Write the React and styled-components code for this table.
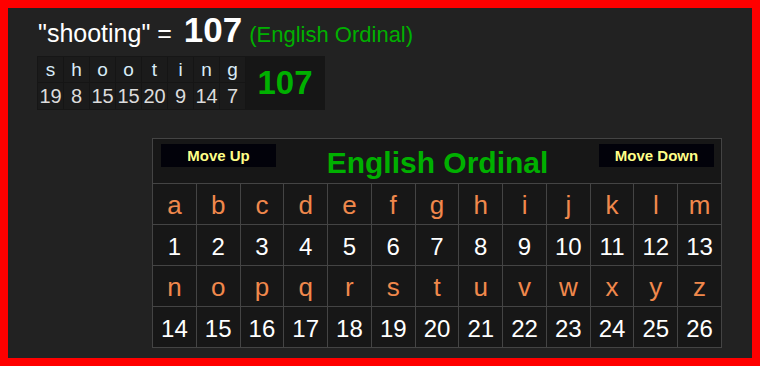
import React from 'react';
import styled, { createGlobalStyle } from 'styled-components';

const GlobalStyle = createGlobalStyle`
  html, body {
    margin: 0;
    padding: 0;
    background: #222222;
  }
  body {
    font-family: "Liberation Sans", Arial, sans-serif;
  }
`;

const Frame = styled.div`
  box-sizing: border-box;
  width: 760px;
  height: 366px;
  border: 8px solid #ff0000;
  background: #222222;
  padding: 2px 0 0 29px;
  overflow: hidden;
`;

const Heading = styled.div`
  display: flex;
  align-items: baseline;
  color: #ffffff;
  height: 46px;
  padding-left: 1px;
  white-space: pre;
`;

const Word = styled.span`
  font-size: 25px;
`;

const Total = styled.span`
  font-size: 35px;
  font-weight: bold;
  margin-left: 12px;
`;

const Cipher = styled.span`
  font-size: 22px;
  color: #00b000;
  margin-left: 7px;
`;

const Breakdown = styled.div`
  display: flex;
  width: max-content;
  background: #1b1b1b;
  border: 1px solid #161616;
`;

const LetterCol = styled.div`
  display: grid;
  grid-template-rows: 26px 26px;
  width: 25px;
  border-right: 1px solid #151515;
  text-align: center;
`;

const Cell = styled.div`
  display: flex;
  align-items: center;
  justify-content: center;
  font-size: ${p => (p.$letter ? '19px' : '20px')};
  color: ${p => (p.$letter ? '#d8ecf8' : '#dcdcdc')};
  border-bottom: ${p => (p.$letter ? '1px solid #151515' : 'none')};
`;

const SumCell = styled.div`
  width: 78px;
  display: flex;
  align-items: center;
  justify-content: center;
  font-size: 33px;
  font-weight: bold;
  color: #00b000;
  background: #161616;
`;

const Board = styled.div`
  margin: 28px 0 0 115px;
  width: 570px;
  box-sizing: border-box;
  display: grid;
  grid-template-columns: repeat(13, 1fr);
  grid-template-rows: 44px repeat(4, 40px);
  gap: 1px;
  padding: 1px;
  background: #444444;
`;

const BoardHead = styled.div`
  grid-column: 1 / -1;
  background: #171717;
  display: flex;
  justify-content: space-between;
  align-items: flex-start;
  padding: 5px 7px 0 8px;
`;

const MoveButton = styled.div`
  width: 115px;
  height: 23px;
  background: #02020a;
  color: #ffff88;
  font-size: 15px;
  font-weight: bold;
  display: flex;
  align-items: center;
  justify-content: center;
`;

const BoardTitle = styled.div`
  color: #00b000;
  font-size: 30px;
  font-weight: bold;
  line-height: 34px;
  padding-top: 2px;
`;

const BoardCell = styled.div`
  background: #171717;
  display: flex;
  align-items: center;
  justify-content: center;
  padding-top: 3px;
  font-size: ${p => (p.$letter ? '26px' : '24px')};
  color: ${p => (p.$letter ? '#f0884c' : '#ffffff')};
`;

const word = 'shooting';
const alpha = 'abcdefghijklmnopqrstuvwxyz'.split('');
const value = ch => ch.charCodeAt(0) - 96;

export default function App() {
  const firstHalf = alpha.slice(0, 13);
  const secondHalf = alpha.slice(13);
  const total = word.split('').reduce((s, c) => s + value(c), 0);

  return (
    <>
      <GlobalStyle />
      <Frame>
        <Heading>
          <Word>"{word}" =</Word>
          <Total>{total}</Total>
          <Cipher>(English Ordinal)</Cipher>
        </Heading>

        <Breakdown>
          {word.split('').map((ch, i) => (
            <LetterCol key={i}>
              <Cell $letter>{ch}</Cell>
              <Cell>{value(ch)}</Cell>
            </LetterCol>
          ))}
          <SumCell>{total}</SumCell>
        </Breakdown>

        <Board>
          <BoardHead>
            <MoveButton>Move Up</MoveButton>
            <BoardTitle>English Ordinal</BoardTitle>
            <MoveButton>Move Down</MoveButton>
          </BoardHead>
          {firstHalf.map(ch => <BoardCell key={ch} $letter>{ch}</BoardCell>)}
          {firstHalf.map(ch => <BoardCell key={'n' + ch}>{value(ch)}</BoardCell>)}
          {secondHalf.map(ch => <BoardCell key={ch} $letter>{ch}</BoardCell>)}
          {secondHalf.map(ch => <BoardCell key={'n' + ch}>{value(ch)}</BoardCell>)}
        </Board>
      </Frame>
    </>
  );
}
